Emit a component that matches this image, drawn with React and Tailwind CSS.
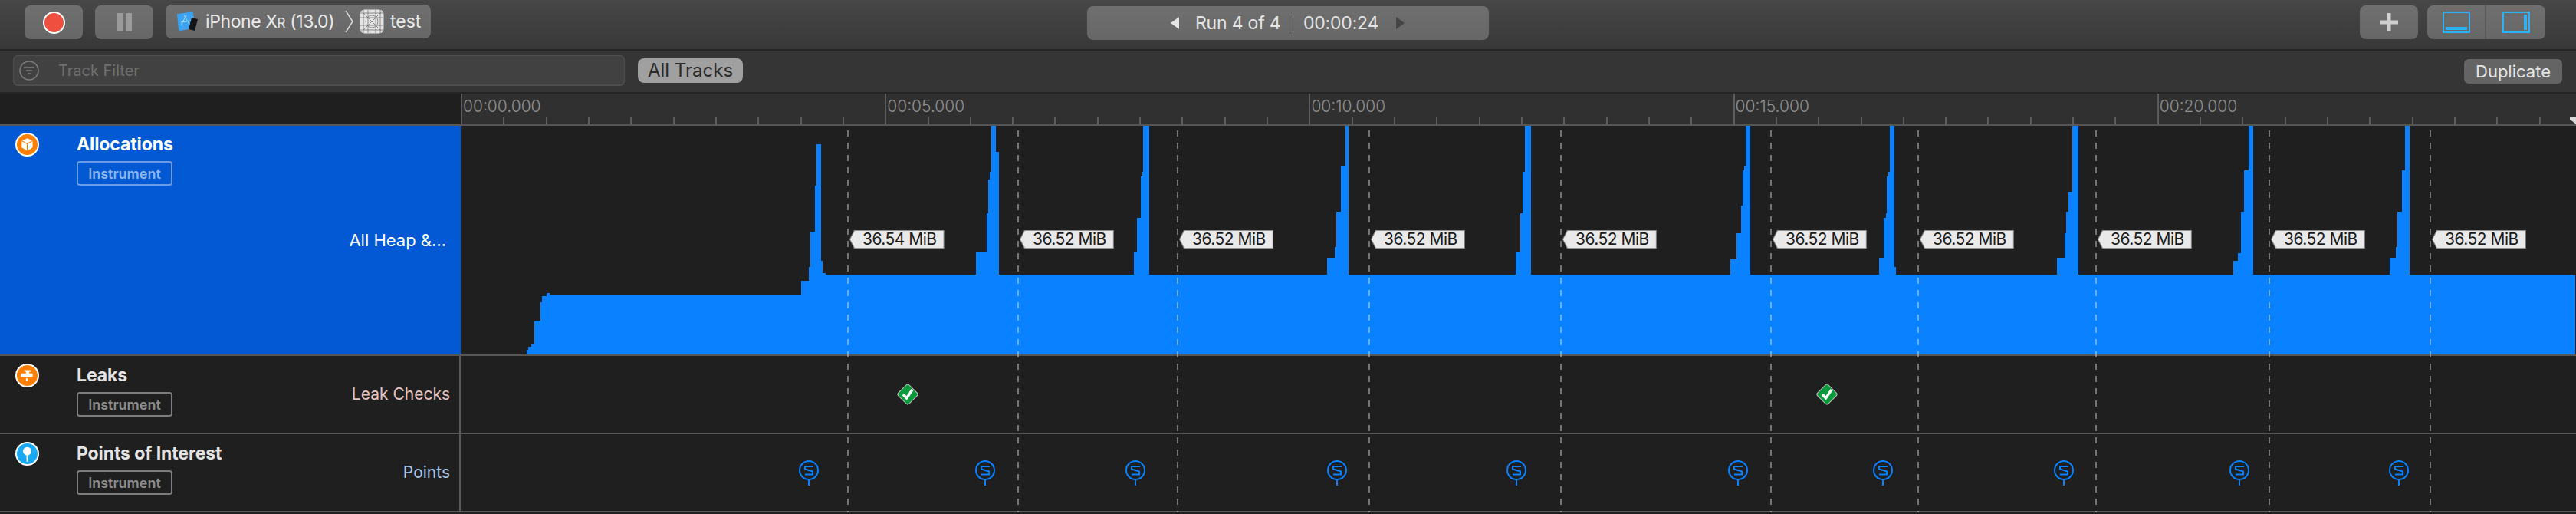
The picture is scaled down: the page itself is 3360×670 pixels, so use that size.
import React from 'react';

const FONT = "font-['Inter','Liberation_Sans',sans-serif]";

// allocation graph steps, measured off the timeline: [x, height from x on] in page pixels
const steps = [
  [688, 456], [690, 452], [694, 448], [698, 418], [706, 394], [708, 386], [714, 382], [718, 384],
  [1046, 366], [1056, 348], [1058, 302], [1064, 242], [1066, 188], [1072, 340], [1074, 356], [1078, 358],
  [1274, 328], [1288, 278], [1290, 234], [1292, 224], [1294, 164], [1300, 198], [1304, 358],
  [1480, 328], [1484, 284], [1489, 230], [1491, 224], [1492, 164], [1500, 358],
  [1732, 336], [1742, 322], [1744, 276], [1750, 216], [1756, 164], [1760, 358],
  [1978, 328], [1984, 278], [1987, 224], [1990, 164], [1998, 358],
  [2258, 338], [2266, 304], [2272, 268], [2274, 222], [2276, 216], [2278, 164], [2284, 358],
  [2452, 336], [2458, 284], [2461, 278], [2462, 230], [2464, 224], [2466, 164], [2472, 348], [2474, 358],
  [2684, 336], [2694, 304], [2696, 276], [2699, 250], [2704, 164], [2712, 358],
  [2914, 340], [2920, 330], [2924, 276], [2928, 222], [2934, 164], [2940, 358],
  [3118, 336], [3126, 322], [3128, 276], [3134, 222], [3138, 164], [3144, 358],
];

const buildGraph = () => {
  const pts = [[688, 462]];
  steps.forEach(([x, y], i) => {
    if (i > 0) pts.push([x, steps[i - 1][1]]);
    pts.push([x, y]);
  });
  pts.push([3360, 358], [3360, 462]);
  return pts.map(([x, y]) => `${x - 602},${y - 164}`).join(' ');
};

const dashes = [1106, 1328, 1536, 1786, 2036, 2310, 2502, 2734, 2960, 3170];
const labels = [
  { x: 1108, text: '36.54 MiB' },
  { x: 1330, text: '36.52 MiB' },
  { x: 1538, text: '36.52 MiB' },
  { x: 1788, text: '36.52 MiB' },
  { x: 2038, text: '36.52 MiB' },
  { x: 2312, text: '36.52 MiB' },
  { x: 2504, text: '36.52 MiB' },
  { x: 2736, text: '36.52 MiB' },
  { x: 2962, text: '36.52 MiB' },
  { x: 3172, text: '36.52 MiB' },
];
const checks = [1184, 2383];
const points = [1055, 1285, 1481, 1744, 1978, 2267, 2456, 2692, 2921, 3129];
const majors = ['00:00.000', '00:05.000', '00:10.000', '00:15.000', '00:20.000', ''];

const ToolButton = ({ className, children }) => (
  <div className={`flex items-center bg-gradient-to-b from-[#6f6f6f] to-[#676767] rounded-[8px] ${className}`}>
    {children}
  </div>
);

const XcodeIcon = () => (
  <svg width="30" height="26" viewBox="0 0 30 26">
    <path d="M2 4 Q1 3 3 3 L21 0.5 Q23 0.5 23 2 L25 20 Q25 22 23 22 L6 25 Q4 25 4 23 Z" fill="#3ba3f2" />
    <path d="M7 18 L14 5 M11 5 L19 18 M7 14 L20 12" stroke="#a7dcff" strokeWidth="1" fill="none" />
    <path d="M21 8 L29 10 L25 25 L17 23 Z" fill="#141414" />
  </svg>
);

const TestIcon = () => (
  <svg width="32" height="32" viewBox="0 0 32 32">
    <rect x="0.5" y="0.5" width="31" height="31" rx="6" fill="#e4e4e4" />
    <g stroke="#777" strokeWidth="0.8" fill="none">
      <path d="M5 1V31M11 1V31M21 1V31M27 1V31M1 5H31M1 11H31M1 21H31M1 27H31M3 3L29 29M29 3L3 29" />
      <circle cx="16" cy="16" r="8" />
    </g>
  </svg>
);

const TrackIcon = ({ color, children }) => (
  <div className={`w-[31px] h-[31px] rounded-full border-2 border-white flex items-center justify-center ${color}`}>
    <svg width="23" height="23" viewBox="0 0 21 21">{children}</svg>
  </div>
);

const TrackInfo = ({ title, titleColor, badgeColor, subtitle, subtitleColor, selected, icon, top }) => (
  <div className={`w-[601px] shrink-0 h-full flex relative ${selected ? 'bg-[#0259d3]' : 'bg-[#1f1f1f] border-r-2 border-[#5a5a5a]'}`}>
    <div className={`pl-[20px] w-[100px] shrink-0 ${top}`}>{icon}</div>
    <div className={`flex flex-col items-start ${top}`}>
      <div className={`text-[23px] leading-[31px] font-bold tracking-[-0.1px] ${titleColor}`}>{title}</div>
      <div className={`mt-[6px] w-[125px] h-[32px] rounded-[4px] border-2 flex items-center justify-center text-[18px] font-semibold ${badgeColor}`}>
        Instrument
      </div>
    </div>
    <div className={`absolute top-1/2 -translate-y-1/2 ${subtitleColor}`}>{subtitle}</div>
  </div>
);

const Ruler = () => (
  <div className="h-[40px] flex">
    <div className="w-[601px] shrink-0 bg-[#1f1f1f]" />
    <div className="flex-1 bg-[#303030] flex overflow-hidden relative">
      {majors.map((label, i) => (
        <div key={i} className="w-[553.2px] shrink-0 border-l-2 border-[#5c5c5c] flex flex-col justify-between">
          <div className="pl-[1px] pt-[5px] text-[21px] leading-[24px] font-light text-[#8f8f8f]">{label}</div>
          <div className="h-[10px] flex">
            {Array.from({ length: 10 }).map((_, j) => (
              <div key={j} className={`flex-1 ${j < 9 ? 'border-r-2 border-[#5c5c5c]' : ''}`} />
            ))}
          </div>
        </div>
      ))}
      {/* playhead marker, right edge */}
      <div className="absolute right-0 bottom-0 w-[8px] h-[10px] bg-[#d8d8d8] [clip-path:polygon(0_0,100%_0,100%_100%,40%_60%,0_40%)]" />
    </div>
  </div>
);

export default function App() {
  return (
    <div className={`w-[3360px] h-[670px] overflow-hidden bg-[#1f1f1f] ${FONT} relative`}>
      {/* top toolbar */}
      <div className="h-[64px] bg-gradient-to-b from-[#474747] to-[#383838] flex items-start relative">
        <ToolButton className="ml-[32px] mt-[7px] w-[76px] h-[44px] justify-center">
          <div className="w-[29px] h-[29px] rounded-full bg-[#ef4f3f] border-2 border-white" />
        </ToolButton>
        <ToolButton className="ml-[16px] mt-[7px] w-[76px] h-[44px] justify-center gap-[4px]">
          <div className="w-[8px] h-[24px] bg-[#9a9a9a]" />
          <div className="w-[8px] h-[24px] bg-[#9a9a9a]" />
        </ToolButton>
        <ToolButton className="ml-[16px] mt-[6px] w-[346px] h-[44px] pl-[13px] text-[#e8e8e8] text-[23px]">
          <XcodeIcon />
          <span className="ml-[9px] w-[172px] tracking-[-0.4px] whitespace-nowrap">iPhone X<span className="text-[17px]">R</span> (13.0)</span>
          <svg className="ml-[10px]" width="11" height="28" viewBox="0 0 11 28">
            <path d="M1 0 L10 14 L1 28" stroke="#e0e0e0" strokeWidth="1.4" fill="none" />
          </svg>
          <div className="ml-[8px]"><TestIcon /></div>
          <span className="ml-[8px]">test</span>
        </ToolButton>

        <ToolButton className="absolute left-[1418px] top-[8px] w-[524px] h-[44px] text-[#e4e4e4] text-[23px]">
          <svg className="ml-[109px]" width="11" height="16" viewBox="0 0 11 16"><path d="M11 0V16L0 8Z" fill="#e6e6e6" /></svg>
          <span className="ml-[21px] w-[107px] whitespace-nowrap tracking-[-0.2px]">Run 4 of 4</span>
          <span className="ml-[16px] w-px h-[24px] bg-[#dcdcdc]" />
          <span className="ml-[17px] w-[98px] whitespace-nowrap tracking-[-0.2px]">00:00:24</span>
          <svg className="ml-[23px]" width="11" height="16" viewBox="0 0 11 16"><path d="M0 0V16L11 8Z" fill="#454545" /></svg>
        </ToolButton>

        <ToolButton className="absolute left-[3078px] top-[7px] w-[76px] h-[44px] justify-center">
          <svg width="24" height="24" viewBox="0 0 24 24"><path d="M9.5 0H14.5V9.5H24V14.5H14.5V24H9.5V14.5H0V9.5H9.5Z" fill="#cfcfcf" /></svg>
        </ToolButton>
        <ToolButton className="absolute left-[3166px] top-[7px] w-[154px] h-[44px]">
          <div className="w-[77px] h-full flex items-center justify-center border-r-2 border-[#5a5a5a]">
            <div className="w-[36px] h-[28px] border-2 border-[#2db2f7] flex items-end p-[2px]">
              <div className="w-full h-[4px] bg-[#2db2f7]" />
            </div>
          </div>
          <div className="flex-1 h-full flex items-center justify-center">
            <div className="w-[36px] h-[28px] border-2 border-[#2db2f7] flex justify-end p-[2px]">
              <div className="w-[4px] h-full bg-[#2db2f7]" />
            </div>
          </div>
        </ToolButton>
      </div>
      <div className="h-[2px] bg-[#252525]" />

      {/* filter row */}
      <div className="h-[54px] bg-[#353535] flex items-center pl-[17px] relative">
        <div className="w-[798px] h-[40px] mt-[-2px] rounded-[6px] bg-[#414141] border border-[#4e4e4e] border-b-2 flex items-center pl-[7px]">
          <svg width="26" height="26" viewBox="0 0 26 26">
            <circle cx="13" cy="13" r="12" stroke="#7c7c7c" strokeWidth="1.6" fill="none" />
            <path d="M6 9H20M9 13H17M11 17H15" stroke="#7c7c7c" strokeWidth="1.6" />
          </svg>
          <span className="ml-[25px] text-[20px] text-[#6f6f6f]">Track Filter</span>
        </div>
        <div className="ml-[17px] w-[137px] h-[32px] mt-[-2px] rounded-[8px] bg-[#a0a0a0] text-[#2b2b2b] text-[24px] flex items-center justify-center">
          All Tracks
        </div>
        <div className="absolute left-[3214px] top-[11px] w-[128px] h-[32px] rounded-[6px] bg-[#646464] text-[#e4e4e4] text-[22px] flex items-center justify-center">
          Duplicate
        </div>
      </div>
      <div className="h-[2px] bg-[#252525]" />

      <Ruler />
      <div className="h-[2px] bg-[#565656]" />

      {/* tracks */}
      <div className="relative">
        <div className="h-[298px] flex">
          <TrackInfo
            title="Allocations"
            titleColor="text-white"
            badgeColor="border-[#6a9be4] text-[#8fb5ee]"
            subtitle="All Heap &…"
            subtitleColor="text-white text-[22px] right-[19px]"
            selected
            top="pt-[9px]"
            icon={
              <TrackIcon color="bg-[#ff8000]">
                <path d="M10.5 3 L17 6 V14 L10.5 18 L4 14 V6 Z" fill="#fff" />
                <path d="M4 6 L10.5 9.5 L17 6 M10.5 9.5 V18" stroke="#ff8000" strokeWidth="1" fill="none" />
              </TrackIcon>
            }
          />
          <div className="flex-1 bg-[#1f1f1f] relative">
            <svg className="absolute left-0 top-0" width="2758" height="298">
              <polygon points={buildGraph()} fill="#0a82ff" />
            </svg>
          </div>
        </div>
        <div className="h-[2px] bg-[#565656]" />
        <div className="h-[100px] flex">
          <TrackInfo
            title="Leaks"
            titleColor="text-[#e4e4e4]"
            badgeColor="border-[#7d7d7d] text-[#8c8c8c]"
            subtitle="Leak Checks"
            subtitleColor="text-[#e7c3c0] text-[21px] right-[12px]"
            top="pt-[10px]"
            icon={
              <TrackIcon color="bg-[#ff8000]">
                <path d="M3 8H9V6H7V4H15V6H13V8H17V12H3Z M10 13 C8.5 15 8.5 17 10 17.5 C11.5 17 11.5 15 10 13Z" fill="#fff" />
              </TrackIcon>
            }
          />
          <div className="flex-1 bg-[#1f1f1f]" />
        </div>
        <div className="h-[2px] bg-[#565656]" />
        <div className="h-[100px] flex">
          <TrackInfo
            title="Points of Interest"
            titleColor="text-[#e4e4e4]"
            badgeColor="border-[#7d7d7d] text-[#8c8c8c]"
            subtitle="Points"
            subtitleColor="text-[#a9c6ea] text-[21px] right-[12px]"
            top="pt-[10px]"
            icon={
              <TrackIcon color="bg-[#18a9f5]">
                <circle cx="10.5" cy="7.5" r="5" fill="#fff" />
                <rect x="9.7" y="10" width="1.6" height="10" fill="#fff" />
              </TrackIcon>
            }
          />
          <div className="flex-1 bg-[#1f1f1f]" />
        </div>
        <div className="h-[2px] bg-[#565656]" />

        {/* dashed run markers, they cross every track */}
        <svg className="absolute left-[602px] top-0 pointer-events-none" width="2758" height="504">
          {dashes.map((x) => (
            <line key={x} x1={x - 602} x2={x - 602} y1="6" y2="504" stroke="#ffffff" strokeOpacity="0.38" strokeWidth="2" strokeDasharray="8 8" />
          ))}
        </svg>

        {labels.map((l) => (
          <div key={l.x} style={{ left: l.x }} className="absolute top-[136px] h-[24px] bg-[#8f8f8f] [clip-path:polygon(6px_0,100%_0,100%_100%,6px_100%,0_50%)]">
            <div className="m-px h-[22px] pl-[16px] pr-[9px] bg-[#e9e9e9] text-[#1b1b1b] text-[21px] leading-[22px] whitespace-nowrap tracking-[-0.5px] [clip-path:polygon(6px_0,100%_0,100%_100%,6px_100%,0_50%)]">
              {l.text}
            </div>
          </div>
        ))}

        {checks.map((x) => (
          <svg key={x} style={{ left: x - 16 }} className="absolute top-[334px]" width="32" height="32" viewBox="0 0 32 32">
            <rect x="6" y="6" width="20" height="20" rx="3" transform="rotate(45 16 16)" fill="#0a9a3c" stroke="#c9c9c9" strokeWidth="1" />
            <path d="M10 16 L14.5 21 L22 10" stroke="#fff" strokeWidth="3.4" fill="none" />
          </svg>
        ))}

        {points.map((x) => (
          <svg key={x} style={{ left: x - 13 }} className="absolute top-[436px]" width="26" height="34" viewBox="0 0 26 34">
            <circle cx="13" cy="13" r="12" stroke="#0a82ff" strokeWidth="2" fill="none" />
            <path d="M19 8H8V11.5L18 14.5V18.5H8" stroke="#0a82ff" strokeWidth="2" fill="none" />
            <rect x="12" y="25" width="2" height="8" fill="#0a82ff" />
          </svg>
        ))}
      </div>
    </div>
  );
}
